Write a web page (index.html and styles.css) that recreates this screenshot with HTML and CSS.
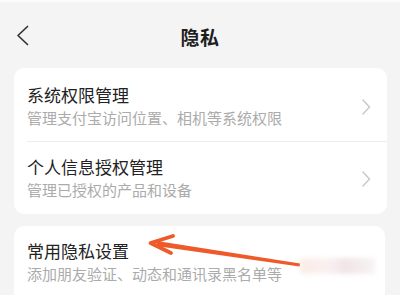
FILE: index.html
```html
<!DOCTYPE html>
<html>
<head>
<meta charset="utf-8">
<link rel="stylesheet" href="styles.css">
</head>
<body>
<div class="page">
  <div class="topline"></div>
  <header class="header">
    <svg class="back" width="14" height="22" viewBox="0 0 14 22"><path d="M11.5 1.5 L2 10.5 L11.5 19.5" fill="none" stroke="#333" stroke-width="1.7" stroke-linecap="round" stroke-linejoin="round"/></svg>
    <div class="title">隐私</div>
  </header>
  <section class="card">
    <div class="row">
      <div class="texts">
        <div class="r-title">系统权限管理</div>
        <div class="r-sub">管理支付宝访问位置、相机等系统权限</div>
      </div>
      <svg class="chev" width="9" height="16" viewBox="0 0 9 16"><path d="M1 1 L7.5 8 L1 15" fill="none" stroke="#c9c9c9" stroke-width="1.5" stroke-linecap="round" stroke-linejoin="round"/></svg>
    </div>
    <div class="row divided">
      <div class="texts">
        <div class="r-title">个人信息授权管理</div>
        <div class="r-sub">管理已授权的产品和设备</div>
      </div>
      <svg class="chev" width="9" height="16" viewBox="0 0 9 16"><path d="M1 1 L7.5 8 L1 15" fill="none" stroke="#c9c9c9" stroke-width="1.5" stroke-linecap="round" stroke-linejoin="round"/></svg>
    </div>
  </section>
  <section class="card card2">
    <div class="row row3">
      <div class="texts">
        <div class="r-title">常用隐私设置</div>
        <div class="r-sub">添加朋友验证、动态和通讯录黑名单等</div>
      </div>
    </div>
  </section>
  <div class="blur"></div>
  <svg class="arrow" width="400" height="295" viewBox="0 0 400 295">
    <path d="M157 241 L300 263.5 L299.5 266.5 L156 246 Z" fill="#ee5a2a"/>
    <path d="M173 236 L150.5 243 L171 253" fill="none" stroke="#ee5a2a" stroke-width="3.8" stroke-linecap="round" stroke-linejoin="round"/>
  </svg>
</div>
</body>
</html>
```
FILE: styles.css
```css
html, body {
  margin: 0;
  padding: 0;
}
body {
  width: 400px;
  height: 295px;
  overflow: hidden;
  background: #f4f4f4;
  font-family: "Noto Sans CJK SC", "Noto Sans", sans-serif;
}
.page {
  position: relative;
  width: 400px;
  height: 295px;
  display: flex;
  flex-direction: column;
  overflow: hidden;
}
.page > * {
  flex-shrink: 0;
}
.topline {
  height: 2px;
  background: #fbfbfb;
}
.header {
  height: 66px;
  display: flex;
  justify-content: center;
  align-items: flex-start;
  padding-top: 25px;
  box-sizing: border-box;
  position: relative;
}
.back {
  position: absolute;
  left: 16px;
  top: 23px;
}
.title {
  font-size: 19px;
  font-weight: 700;
  color: #1e1e1e;
  line-height: 1;
  letter-spacing: 0.5px;
}
.card {
  margin: 0 13px 0 14px;
  background: #ffffff;
  border-radius: 10px;
  padding-left: 13px;
}
.row {
  display: flex;
  align-items: center;
  justify-content: space-between;
  padding: 17px 16px 13px 0;
}
.divided {
  border-top: 1px solid #ededed;
  padding-top: 15px;
  padding-bottom: 14px;
}
.texts {
  display: flex;
  flex-direction: column;
  gap: 3px;
}
.r-title {
  font-size: 17px;
  line-height: 20px;
  color: #222;
}
.r-sub {
  font-size: 15px;
  line-height: 20px;
  color: #ababab;
}
.card2 {
  margin-top: 12px;
  margin-right: 15px;
  flex: 1 0 auto;
  border-radius: 10px 10px 0 0;
}
.row3 {
  padding-top: 15px;
}
.blur {
  position: absolute;
  left: 300px;
  top: 258px;
  width: 75px;
  height: 16px;
  background: linear-gradient(90deg, #fbe9e2 0%, #f7eeee 40%, #eedfe0 60%, #f5f1f1 100%);
  filter: blur(2px);
  opacity: 0.8;
}
.arrow {
  position: absolute;
  left: 0;
  top: 0;
  pointer-events: none;
}
```
